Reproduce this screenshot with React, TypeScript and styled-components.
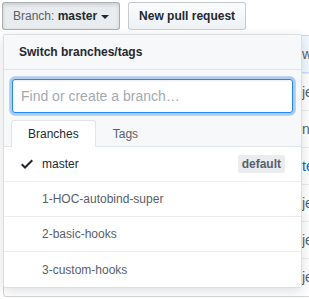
import { FC } from "react";
import styled, { createGlobalStyle } from "styled-components";

const GlobalStyle = createGlobalStyle`
  body {
    margin: 0;
    background: #fff;
    font-family: "Liberation Sans", Arial, sans-serif;
    color: #24292e;
  }
  * {
    box-sizing: border-box;
  }
`;

const branches = [
  { name: "master", current: true, isDefault: true },
  { name: "1-HOC-autobind-super" },
  { name: "2-basic-hooks" },
  { name: "3-custom-hooks" },
];

const fileRows = [
  { text: "jest setup", link: false },
  { text: "node modules", link: false },
  { text: "tests", link: true },
  { text: "jest config", link: false },
  { text: "jest config", link: false },
  { text: "jest config", link: false },
];

const CheckIcon: FC = () => (
  <svg width="12" height="16" viewBox="0 0 12 16" fill="#24292e">
    <path d="M12 5l-8 8-4-4 1.5-1.5L4 10l6.5-6.5L12 5z" />
  </svg>
);

export default function App() {
  return (
    <>
      <GlobalStyle />
      <Page>
        <ButtonRow>
          <Button $selected>
            <ButtonLabel>Branch: </ButtonLabel>
            <strong>master</strong>
            <Caret />
          </Button>
          <Button>
            <strong>New pull request</strong>
          </Button>
        </ButtonRow>

        <FileBox>
          <CommitTease>
            <MessageCell>wip: hooks examples</MessageCell>
          </CommitTease>
          {fileRows.map((row, i) => (
            <FileRow key={i}>
              <NameCell />
              <MessageCell $link={row.link}>{row.text}</MessageCell>
            </FileRow>
          ))}
        </FileBox>

        <Menu>
          <MenuHeader>Switch branches/tags</MenuHeader>
          <MenuFilters>
            <FilterInput placeholder="Find or create a branch…" />
            <Tabs>
              <Tab $active>Branches</Tab>
              <Tab>Tags</Tab>
            </Tabs>
          </MenuFilters>
          <MenuList>
            {branches.map((b) => (
              <MenuItem key={b.name} $current={!!b.current}>
                <CheckSlot>{b.current && <CheckIcon />}</CheckSlot>
                <BranchName>{b.name}</BranchName>
                {b.isDefault && <DefaultLabel>default</DefaultLabel>}
              </MenuItem>
            ))}
          </MenuList>
        </Menu>
      </Page>
    </>
  );
}

const Page = styled.div`
  position: relative;
  width: 309px;
  height: 299px;
  overflow: hidden;
  padding: 2px 0 0 2px;
`;

const ButtonRow = styled.div`
  display: flex;
  gap: 8px;
`;

const Button = styled.button<{ $selected?: boolean }>`
  display: flex;
  align-items: center;
  height: 28px;
  padding: 0 10px;
  font-family: inherit;
  font-size: 12px;
  line-height: 20px;
  color: #24292e;
  border: 1px solid
    ${({ $selected }) => ($selected ? "rgba(27,31,35,.3)" : "rgba(27,31,35,.2)")};
  border-radius: 3px;
  background: ${({ $selected }) =>
    $selected ? "#e9ecef" : "linear-gradient(-180deg, #fafbfc 0%, #eff3f6 90%)"};
  box-shadow: ${({ $selected }) =>
    $selected ? "inset 0 0.15em 0.3em rgba(27,31,35,.15)" : "none"};
  white-space: pre;

  strong {
    font-weight: bold;
  }
`;

const ButtonLabel = styled.span`
  color: #586069;
`;

const Caret = styled.span`
  display: inline-block;
  margin-left: 4px;
  margin-top: 2px;
  border-top: 4px solid #24292e;
  border-left: 4px solid transparent;
  border-right: 4px solid transparent;
`;

const FileBox = styled.div`
  margin-top: 5px;
  margin-left: 1px;
  width: 420px;
  height: 262px;
  border: 1px solid #d1d5da;
  border-radius: 3px;
  overflow: hidden;
`;

const CommitTease = styled.div`
  display: flex;
  align-items: center;
  height: 37px;
  padding-left: 298px;
  background: #f1f8ff;
  border-bottom: 1px solid #c8e1ff;
  font-size: 14px;
  color: #586069;
`;

const FileRow = styled.div`
  display: grid;
  grid-template-columns: 298px 1fr;
  align-items: center;
  height: 37px;
  border-top: 1px solid #eaecef;
  font-size: 14px;

  &:first-of-type {
    border-top: none;
  }
`;

const NameCell = styled.div``;

const MessageCell = styled.span<{ $link?: boolean }>`
  white-space: nowrap;
  color: ${({ $link }) => ($link ? "#0366d6" : "#586069")};
`;

const Menu = styled.div`
  position: absolute;
  top: 34px;
  left: 3px;
  width: 299px;
  background: #fff;
  border: 1px solid rgba(27, 31, 35, 0.15);
  border-radius: 3px;
  box-shadow: 0 3px 12px rgba(27, 31, 35, 0.15);
  overflow: hidden;
`;

const MenuHeader = styled.div`
  height: 35px;
  padding: 0 15px;
  display: flex;
  align-items: center;
  background: #f6f8fa;
  border-bottom: 1px solid #e1e4e8;
  font-size: 12px;
  font-weight: bold;
  color: #24292e;
`;

const MenuFilters = styled.div`
  padding: 9px 8px 0;
  background: #f6f8fa;
`;

const FilterInput = styled.input`
  display: block;
  width: 100%;
  height: 34px;
  padding: 6px 8px;
  font-family: inherit;
  font-size: 14px;
  color: #24292e;
  background: #fff;
  border: 1px solid #2188ff;
  border-radius: 3px;
  outline: none;
  box-shadow: inset 0 1px 2px rgba(27, 31, 35, 0.075),
    0 0 0 0.2em rgba(3, 102, 214, 0.3);

  &::placeholder {
    color: #a3aab1;
  }
`;

const Tabs = styled.div`
  display: flex;
  margin: 7px -8px 0;
  padding-left: 7px;
  border-bottom: 1px solid #e1e4e8;
`;

const Tab = styled.div<{ $active?: boolean }>`
  height: 27px;
  margin-bottom: -1px;
  padding: 0 16px;
  display: flex;
  align-items: center;
  font-size: 12px;
  color: ${({ $active }) => ($active ? "#24292e" : "#586069")};
  background: ${({ $active }) => ($active ? "#fff" : "transparent")};
  border: 1px solid ${({ $active }) => ($active ? "#e1e4e8" : "transparent")};
  border-bottom: none;
  border-radius: 3px 3px 0 0;
`;

const MenuList = styled.div`
  background: #fff;
`;

const MenuItem = styled.div<{ $current: boolean }>`
  display: flex;
  align-items: center;
  height: 35px;
  padding: 0 16px 0 17px;
  border-bottom: 1px solid #eaecef;
  font-size: 12px;
  color: ${({ $current }) => ($current ? "#24292e" : "#586069")};

  &:last-child {
    border-bottom: none;
  }
`;

const CheckSlot = styled.span`
  display: flex;
  width: 12px;
  margin-right: 9px;
`;

const BranchName = styled.span`
  flex: 1;
`;

const DefaultLabel = styled.span`
  height: 18px;
  padding: 0 4px;
  display: flex;
  align-items: center;
  font-size: 12px;
  font-weight: bold;
  color: #586069;
  background: #eaecef;
  border-radius: 2px;
`;
